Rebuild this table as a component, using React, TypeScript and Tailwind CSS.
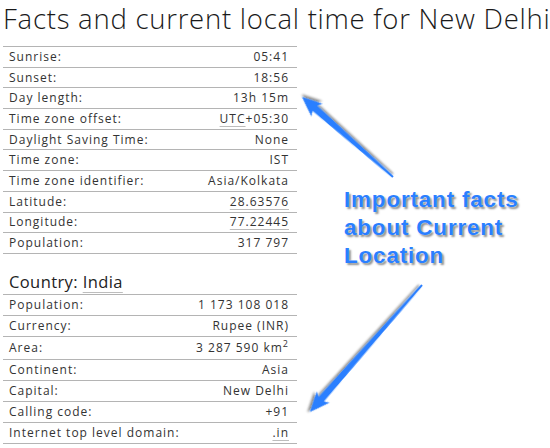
import React from "react";

type Row = { label: string; value: React.ReactNode; h?: string };

const U = ({ children }: { children: React.ReactNode }) => (
  <span className="underline decoration-[#bdbdbd] underline-offset-[3px]">{children}</span>
);

const cityRows: Row[] = [
  { label: "Sunrise:", value: "05:41" },
  { label: "Sunset:", value: "18:56" },
  { label: "Day length:", value: "13h 15m" },
  { label: "Time zone offset:", value: (<><U>UTC</U>+05:30</>) },
  { label: "Daylight Saving Time:", value: "None" },
  { label: "Time zone:", value: "IST" },
  { label: "Time zone identifier:", value: "Asia/Kolkata" },
  { label: "Latitude:", value: <U>28.63576</U> },
  { label: "Longitude:", value: <U>77.22445</U> },
  { label: "Population:", value: "317 797" },
];

const countryRows: Row[] = [
  { label: "Population:", value: "1 173 108 018" },
  { label: "Currency:", value: "Rupee (INR)" },
  {
    label: "Area:",
    value: (
      <>
        3 287 590 km<sup className="text-[9px] -top-[5px]">2</sup>
      </>
    ),
    h: "h-[23.5px]",
  },
  { label: "Continent:", value: "Asia" },
  { label: "Capital:", value: "New Delhi" },
  { label: "Calling code:", value: "+91" },
  { label: "Internet top level domain:", value: <U>.in</U> },
];

function Table({ rows, rowH, top = true }: { rows: Row[]; rowH: string; top?: boolean }) {
  return (
    <div className={top ? "border-t border-[#b4b4b4]" : ""}>
      {rows.map((r, i) => (
        <div
          key={i}
          className={`flex items-center justify-between border-b border-[#b4b4b4] pl-[6px] pr-[8px] ${r.h ?? rowH}`}
        >
          <span>{r.label}</span>
          <span>{r.value}</span>
        </div>
      ))}
    </div>
  );
}

function Arrow({ x1, y1, x2, y2 }: { x1: number; y1: number; x2: number; y2: number }) {
  const dx = x2 - x1;
  const dy = y2 - y1;
  const L = Math.sqrt(dx * dx + dy * dy);
  const ang = (Math.atan2(dy, dx) * 180) / Math.PI;
  const pts = [
    [0, -1],
    [L - 17, -3.6],
    [L - 20, -8.5],
    [L, 0],
    [L - 20, 8.5],
    [L - 17, 3.6],
    [0, 1],
  ]
    .map((p) => p.join(","))
    .join(" ");
  return (
    <g transform={`translate(${x1} ${y1}) rotate(${ang})`}>
      <polygon points={pts} fill="#2a7fff" filter="url(#sh)" />
    </g>
  );
}

export default function App() {
  return (
    <div className="relative w-[550px] h-[448px] bg-white overflow-hidden font-['Open_Sans',sans-serif]">
      <h1 className="pl-[3px] pt-[0px] h-[46px] text-[27.5px] font-light leading-[38px] text-[#1a1a1a] tracking-[0.75px] whitespace-nowrap">
        Facts and current local time for New Delhi
      </h1>
      <div className="ml-[3px] w-[294px] text-[12px] text-[#333] tracking-[1px]">
        <Table rows={cityRows} rowH="h-[20.7px]" />
        <div className="h-[41px] flex items-end pl-[6px] pb-[1px] text-[16.5px] leading-[22px] tracking-[0.4px] text-[#222] border-b border-[#b4b4b4]">
          <span>
            Country:{" "}
            <span className="underline decoration-[#bdbdbd] underline-offset-[4px]">India</span>
          </span>
        </div>
        <Table rows={countryRows} rowH="h-[21px]" top={false} />
      </div>

      <div className="absolute left-[344px] top-[186px] font-['Liberation_Sans',Arial,sans-serif] font-bold text-[22.5px] leading-[28px] tracking-[0.8px] text-[#2a7fff] [text-shadow:0_0_1px_#fff,2px_2px_2px_rgba(0,0,0,0.45)]">
        Important facts
        <br />
        about Current
        <br />
        Location
      </div>

      <svg className="absolute left-0 top-0 pointer-events-none" width="550" height="448">
        <defs>
          <filter id="sh" x="-20%" y="-20%" width="140%" height="140%">
            <feDropShadow dx="2" dy="2" stdDeviation="1.2" floodColor="#000" floodOpacity="0.45" />
          </filter>
        </defs>
        <Arrow x1={393} y1={177} x2={302} y2={97} />
        <Arrow x1={422} y1={285} x2={310} y2={412} />
      </svg>
    </div>
  );
}
